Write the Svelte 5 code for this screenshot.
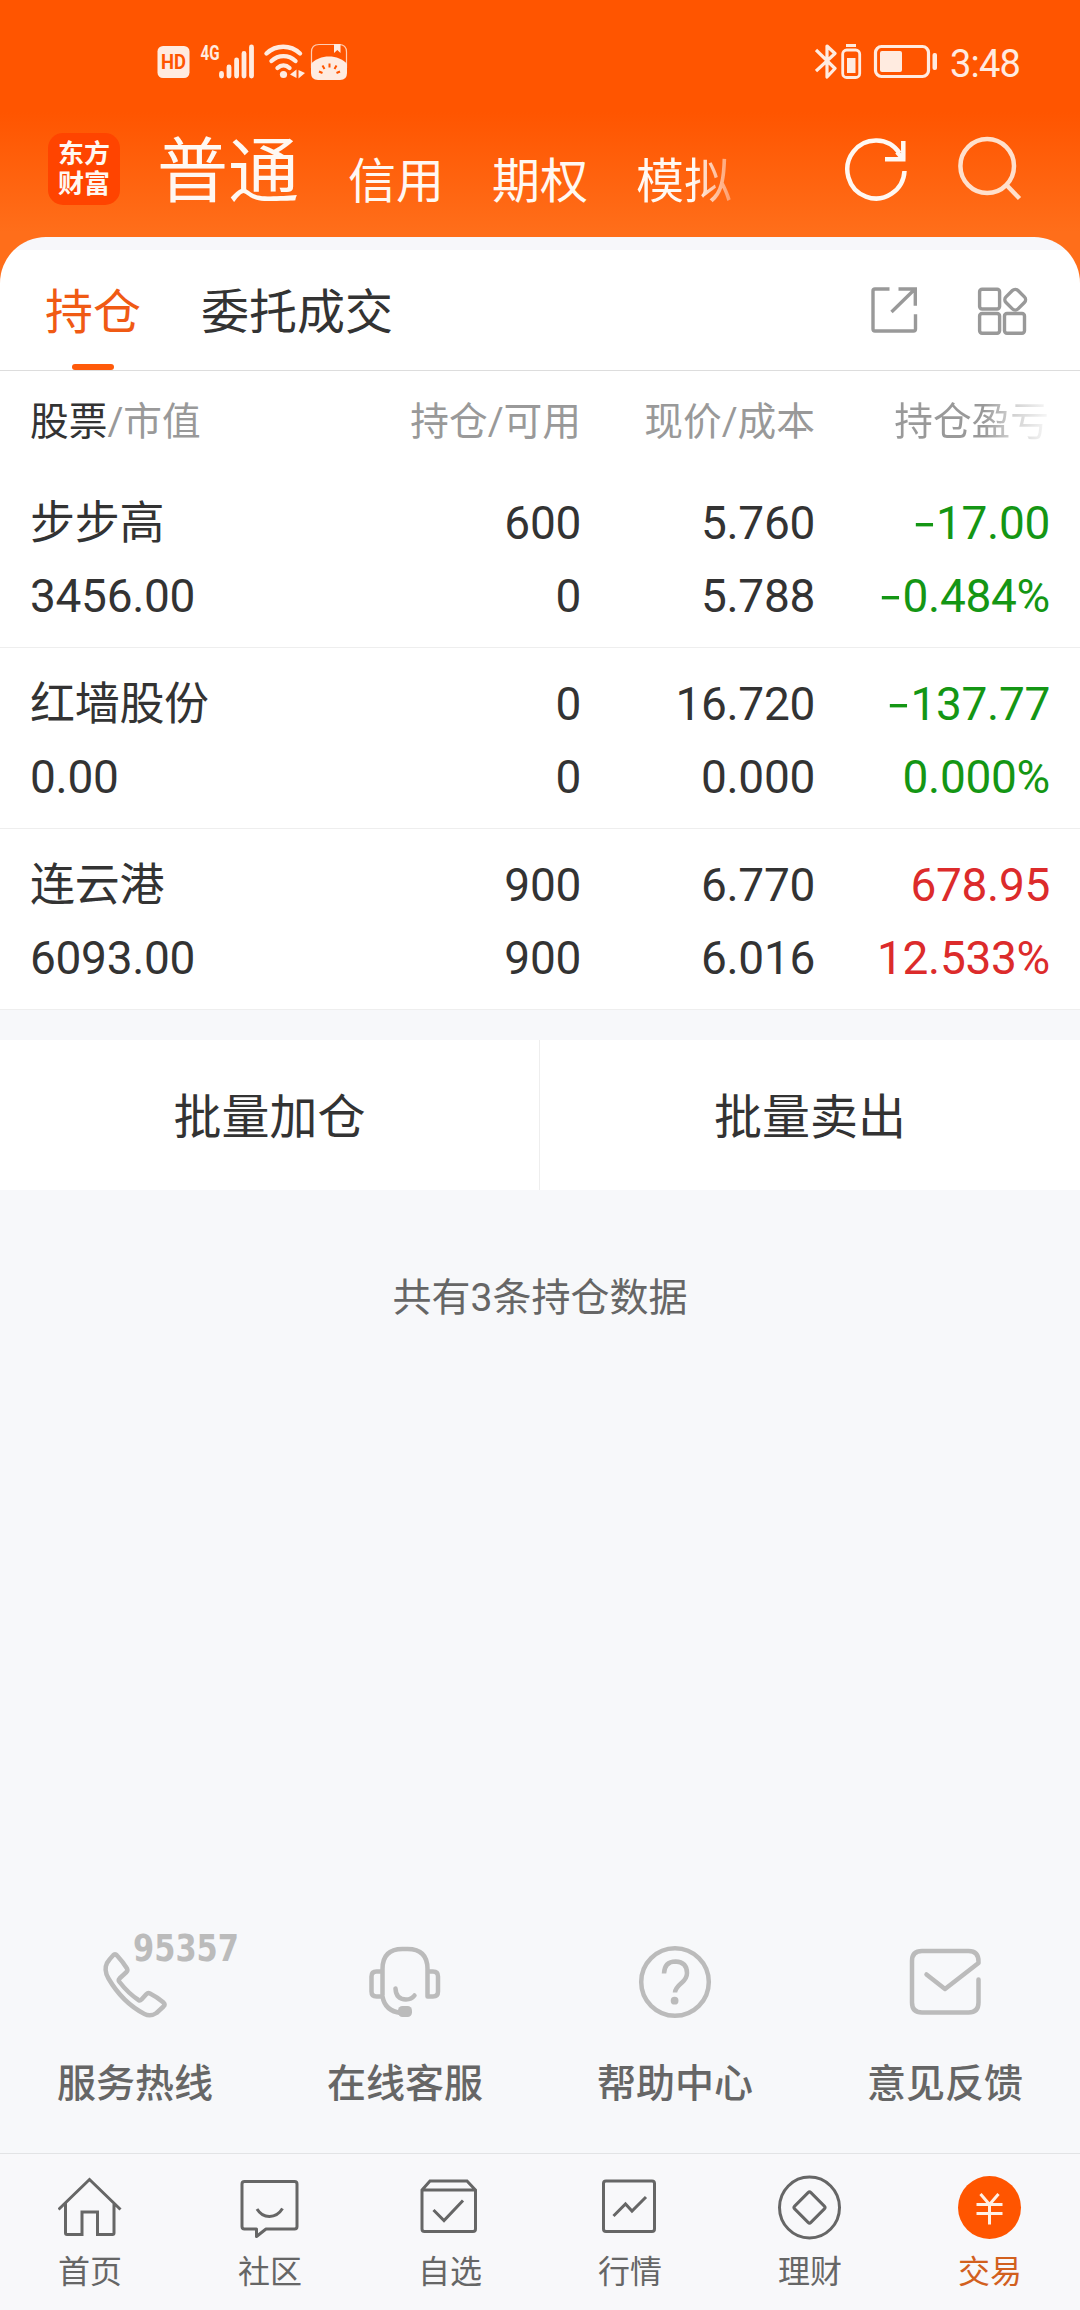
<script>
    const accounts = ['信用', '期权', '模拟'];

    const holdings = [
        { name: '步步高', value: '3456.00', held: '600', usable: '0', price: '5.760', cost: '5.788', profit: '-17.00', rate: '-0.484%' },
        { name: '红墙股份', value: '0.00', held: '0', usable: '0', price: '16.720', cost: '0.000', profit: '-137.77', rate: '0.000%' },
        { name: '连云港', value: '6093.00', held: '900', usable: '900', price: '6.770', cost: '6.016', profit: '678.95', rate: '12.533%' }
    ];

    const services = [
        { id: 'phone', label: '服务热线' },
        { id: 'chat', label: '在线客服' },
        { id: 'help', label: '帮助中心' },
        { id: 'mail', label: '意见反馈' }
    ];

    const navItems = [
        { id: 'home', label: '首页' },
        { id: 'community', label: '社区' },
        { id: 'watchlist', label: '自选' },
        { id: 'market', label: '行情' },
        { id: 'wealth', label: '理财' },
        { id: 'trade', label: '交易' }
    ];

    let active = 'trade';
</script>

<!-- the minus sign is set wider than the font's own hyphen -->
{#snippet signed(text)}
    {#if text.startsWith('-')}<i>-</i>{text.slice(1)}{:else}{text}{/if}
{/snippet}

<div class="app">
    <div class="top">
        <div class="status">
            <svg width="192" height="40" viewBox="156 42 192 40">
                <rect x="157.5" y="46" width="32" height="32" rx="5.5" fill="#ffebe0" />
                <text x="173.5" y="69" class="hd" text-anchor="middle" textLength="25" lengthAdjust="spacingAndGlyphs">HD</text>
                <text x="200.5" y="60" class="net" textLength="19" lengthAdjust="spacingAndGlyphs">4G</text>
                <path d="M221.5 73.5v2.5M229 67v9M236.6 60v16M244 53.5v22.5M251.5 47v29" stroke="#ffebe0" stroke-width="4.8" stroke-linecap="round" />
                <path d="M266.5 53.5c9.5-9 24-9 33.500 0M271.5 61c7-6.5 17-6.5 24 0M277.5 68c3.500-3.300 8.500-3.300 12 0" fill="none" stroke="#ffebe0" stroke-width="4.4" stroke-linecap="round" />
                <circle cx="283.5" cy="74.5" r="3.6" fill="#ffebe0" />
                <path d="M290 74.500l6.500-5v8.500zM298.500 70l6.500 3-6.500 5.500z" fill="#ffebe0" />
                <path d="M311.500 68V52q0-7.500 7.500-7.500h20q7.500 0 7.500 7.500v16" fill="none" stroke="#ffcdb3" stroke-width="1.200" />
                <path d="M334 44h6.500v9l-3.200-3-3.300 3z" fill="#ffebe0" />
                <path d="M311 64c8-10 28-10 36 0v9q0 7-7 7h-22q-7 0-7-7z" fill="#ffebe0" />
                <path d="M329.500 63.500v4M322.500 65.500l2 3.500M336.500 65.500l-2 3.500M319 71.500l3.500 1.500M340 71.500l-3.500 1.500" stroke="#ff5500" stroke-width="2" />
            </svg>
            <div class="status-right">
                <svg width="123" height="40" viewBox="815 42 123 40">
                    <path d="M816 50l19 18.500-8 8.500V46l8 7.500-19 17.500" fill="none" stroke="#ffebe0" stroke-width="3.2" stroke-linejoin="round" />
                    <path d="M846 45.500h10" stroke="#ffebe0" stroke-width="3" />
                    <rect x="842.700" y="50" width="17" height="27.500" rx="4" fill="none" stroke="#ffebe0" stroke-width="2.800" />
                    <rect x="847" y="58" width="8.500" height="15" fill="#ffebe0" />
                    <rect x="875.500" y="46.500" width="53" height="30" rx="6" fill="none" stroke="#ffebe0" stroke-width="3.200" />
                    <rect x="880" y="51" width="22" height="21" rx="2" fill="#ffebe0" />
                    <rect x="932.500" y="53" width="4.500" height="17" rx="2" fill="#ffebe0" />
                </svg>
                <span class="time">3:48</span>
            </div>
        </div>

        <header>
            <div class="logo"><span>东方</span><span>财富</span></div>
            <div class="accounts">
                <h1>普通</h1>
                {#each accounts as account}
                    <span class="account">{account}</span>
                {/each}
            </div>
            <svg class="head-icons" width="180" height="70" viewBox="843 135 180 70" fill="none" stroke-width="4.5">
                <path d="M904.500 171a28.600 29 0 1 1-5-18M903.300 141v18.500M885 159.200h20.500" stroke="#fff8f2" />
                <path d="M897 152l6 7" stroke="#fff8f2" />
                <ellipse cx="987.200" cy="166" rx="26.800" ry="27" stroke="#ffe0cc" />
                <path d="M1006 184.500l13.500 14" stroke="#ffe0cc" />
            </svg>
        </header>

        <div class="tabs">
            <span class="tab selected">持仓</span>
            <span class="tab">委托成交</span>
            <svg width="160" height="52" viewBox="870 285 160 52" fill="none" stroke="#999" stroke-width="3.4">
                <path d="M889.500 289h-14.500q-2 0-2 2v38q0 2 2 2h38.500q2 0 2-2v-14.700M898.500 289h16.800v16.700M891.500 312l23.500-23" />
                <rect x="979.600" y="289.300" width="20" height="19.700" rx="2.500" />
                <rect x="979.600" y="313.500" width="20" height="19.700" rx="2.500" />
                <rect x="1004.500" y="313.500" width="20" height="19.700" rx="2.500" />
                <rect x="1006.700" y="291.200" width="17" height="17" rx="4" transform="rotate(45 1015.200 299.700)" />
            </svg>
        </div>
    </div>

    <section class="table">
        <div class="row titles">
            <span><b>股票</b>/市值</span>
            <span>持仓/可用</span>
            <span>现价/成本</span>
            <span class="fade">持仓盈亏</span>
        </div>
        {#each holdings as item}
            <div class="row holding" class:down={item.profit.startsWith('-')}>
                <span class="name">{item.name}</span>
                <span>{item.held}</span>
                <span>{item.price}</span>
                <span class="profit">{@render signed(item.profit)}</span>
                <span>{item.value}</span>
                <span>{item.usable}</span>
                <span>{item.cost}</span>
                <span class="profit">{@render signed(item.rate)}</span>
            </div>
        {/each}
    </section>

    <div class="batch">
        <button>批量加仓</button>
        <button>批量卖出</button>
    </div>

    <p class="count">共有3条持仓数据</p>

    <div class="services">
        {#each services as service}
            <div class="service">
                <svg width="270" height="100" viewBox="0 -10 270 100" fill="none" stroke="#bbb" stroke-width="4.5" stroke-linecap="round" stroke-linejoin="round">
                    {#if service.id === 'phone'}
                        <path d="M113 24.500q2-2.500 4 0q6 6.500 10 13q1 2-.5 3.500l-7 6.500q-1.500 1.500 0 3.500q9 11.500 19 18q1.500 1 3-.5l5-5.500q1.500-1.500 3.500-.5q7 3.500 13.500 9q2 2 0 4l-7 6.500q-6 4-12 1q-22-11.500-36-35.500q-5-8.500-1.500-15.500q3-4.500 6-7.500z" />
                        <text x="133" y="29.500" class="hotline" textLength="106" lengthAdjust="spacingAndGlyphs">95357</text>
                    {:else if service.id === 'chat'}
                        <path d="M112.500 64V38q0-20 20-20h5q20 0 20 20v27.500h5.500q5 0 5-5v-15q0-5-5-5h-5.500M111 40.500h-4.500q-5 0-5 5v15q0 5 5 5h6q2.500 14.500 18.500 16.500" />
                        <path d="M125.500 57.500q.5 11 10.500 11q5.500 0 8.500-4" />
                        <rect x="128" y="75" width="14" height="11" rx="4.500" fill="#bbb" stroke="none" />
                    {:else if service.id === 'help'}
                        <circle cx="135" cy="51" r="33.800" />
                        <path d="M124 42.500q.5-12 11.500-12q11.500.5 11.500 11.500q0 5-5 9.500q-7 6-7 10" stroke-linecap="butt" />
                        <circle cx="134.600" cy="69.700" r="3.900" fill="#bbb" stroke="none" />
                    {:else}
                        <path d="M168.500 48.500v23q0 10-10 10h-46.500q-10 0-10-10V30q0-10 10-10h46.500q10 0 10 10.500v1.500l-33.500 26-18.500-14.500" />
                    {/if}
                </svg>
                <span>{service.label}</span>
            </div>
        {/each}
    </div>

    <nav>
        {#each navItems as item}
            <div class="nav-item" class:active={item.id === active}>
                <svg width="64" height="66" viewBox="0.5 0 64 66" fill="none" stroke="#666" stroke-width="3" stroke-linejoin="round">
                    {#if item.id === 'home'}
                        <path d="M1 34.500L32 4.500l31 30M8 28v30q0 1.500 1.500 1.500h15v-22.500h15.500v22.500h15q1.500 0 1.500-1.500v-30" stroke-linejoin="miter" />
                    {:else if item.id === 'community'}
                        <path d="M6 6.500h50q2.500 0 2.500 2.500v42.500q0 2.500-2.500 2.500h-28.500l-9.500 7.500v-7.500h-12q-2.500 0-2.500-2.500v-42.500q0-2.500 2.500-2.500z" transform="translate(1)" />
                        <path d="M19.500 34c6 10 19 10 25.500-.5" />
                    {:else if item.id === 'watchlist'}
                        <path d="M4.500 15L12.500 6h37l8.500 9v39q0 2.500-2.500 2.500h-48.500q-2.500 0-2.500-2.500zM4.500 15h53M16 35l10.500 10.500 19-20" stroke-linejoin="miter" />
                    {:else if item.id === 'market'}
                        <rect x="5.500" y="6" width="51" height="50.500" rx="2.500" transform="translate(.5)" />
                        <path d="M16 41l12-12 6.500 7 14-14" stroke-linejoin="miter" />
                    {:else if item.id === 'wealth'}
                        <ellipse cx="32" cy="32.500" rx="30" ry="30.500" />
                        <rect x="20.500" y="21" width="23" height="23" rx="2" transform="rotate(45 32 32.500)" />
                    {:else}
                        <circle cx="32" cy="32.500" r="31.500" fill="#ff5500" stroke="none" />
                        <path d="M23 19l9 10.500 9-10.500M19 29.500h26M19 38.500h26M32 29v20.500" stroke="#fff0e5" />
                    {/if}
                </svg>
                <span>{item.label}</span>
            </div>
        {/each}
    </nav>
</div>

<style>
    :global(body) {
        margin: 0;
        background: #f7f8fa;
    }

    .app {
        display: flex;
        flex-direction: column;
        width: 1080px;
        height: 2310px;
        background: #f7f8fa;
        color: #333;
        font-family: Roboto, "Noto Sans CJK SC", sans-serif;
        overflow: hidden;
    }

    svg {
        display: block;
        flex: none;
    }

    .top {
        background: linear-gradient(#ff5500 112px, #ff6e1a 232px);
    }

    /* status bar */
    .status {
        display: flex;
        justify-content: space-between;
        height: 78px;
        padding: 42px 60px 0 156px;
    }

    .status-right {
        display: flex;
        gap: 12px;
    }

    .time {
        color: #ffebe0;
        font-size: 38px;
        line-height: 44px;
        letter-spacing: -0.8px;
    }

    .hd {
        fill: #ff5500;
        font-size: 21px;
        font-weight: 700;
    }

    .net {
        fill: #ffebe0;
        font-size: 20px;
        font-weight: 700;
    }

    /* header */
    header {
        display: flex;
        height: 117px;
        padding: 0 57px 0 48px;
    }

    .logo {
        display: flex;
        flex-direction: column;
        align-items: center;
        justify-content: center;
        width: 72px;
        height: 72px;
        margin-top: 13px;
        border-radius: 15px;
        background: #ff4400;
        color: #fff8f2;
        font-size: 26px;
        font-weight: 700;
        line-height: 30px;
    }

    .accounts {
        display: flex;
        align-items: baseline;
        flex: 1;
        gap: 48px;
        padding-left: 37px;
        color: #fff8f2;
    }

    h1 {
        margin: 0 1px 0 0;
        font-size: 71px;
        font-weight: 400;
        line-height: 104px;
    }

    .account {
        position: relative;
        top: 2px;
        font-size: 48px;
    }

    .account:last-child {
        background: linear-gradient(90deg, #fff8f2 60%, #ff9a66);
        background-clip: text;
        color: transparent;
    }

    .head-icons {
        margin-top: 15px;
    }

    /* tabs */
    .tabs {
        display: flex;
        gap: 60px;
        height: 120px;
        padding: 13px 50px 0 45px;
        border-bottom: 1px solid #ddd;
        border-radius: 46px 46px 0 0;
        background: linear-gradient(#f7f7fa 13px, #fff 13px);
    }

    .tab {
        position: relative;
        font-size: 48px;
        line-height: 126px;
    }

    .selected {
        color: #f05a14;
    }

    .selected::after {
        content: '';
        position: absolute;
        left: 27px;
        bottom: 0;
        width: 42px;
        height: 6px;
        border-radius: 3px;
        background: #ff5a0a;
    }

    .tabs svg {
        margin: 35px 0 0 auto;
    }

    /* holdings */
    .table {
        background: #fff;
    }

    .row {
        display: grid;
        grid-template-columns: 301px 250px 234px 235px;
        padding: 0 30px;
        text-align: right;
    }

    .row span:nth-child(4n + 1) {
        text-align: left;
    }

    .titles {
        color: #999;
        font-size: 38.7px;
        line-height: 102px;
        height: 96px;
    }

    .titles b {
        color: #333;
        font-weight: 400;
    }

    .fade {
        background: linear-gradient(90deg, #999 58%, #ccc 74%, #f8f8f8 100%);
        background-clip: text;
        color: transparent;
        justify-self: end;
        margin-right: 1px;
    }

    .holding {
        padding-top: 20px;
        padding-bottom: 14px;
        border-bottom: 1px solid #eee;
        font-size: 46px;
        line-height: 73px;
        letter-spacing: -0.3px;
    }

    .holding i {
        display: inline-block;
        margin: 0 4px 0 2px;
        font-family: "Noto Sans CJK SC", sans-serif;
        font-size: 48px;
        font-style: normal;
        line-height: 1;
        transform: translateY(-1px) scaleX(1.4);
    }

    .name {
        font-size: 45px;
    }

    .profit {
        color: #dc2b2b;
    }

    .down .profit {
        color: #149614;
    }

    /* batch actions */
    .batch {
        display: flex;
        height: 150px;
        margin-top: 30px;
        background: #fff;
    }

    button {
        box-sizing: border-box;
        width: 540px;
        padding: 5px 0 0;
        border: 0;
        background: none;
        color: #333;
        font-family: inherit;
        font-size: 48px;
        line-height: 56px;
    }

    button:first-child {
        border-right: 1px solid #eee;
    }

    .count {
        margin: 78px 0 0;
        color: #666;
        font-size: 39px;
        line-height: 60px;
        text-align: center;
    }

    /* services */
    .services {
        display: flex;
        margin-top: auto;
        padding-bottom: 39px;
    }

    .service {
        display: flex;
        flex-direction: column;
        align-items: center;
        gap: 33px;
        color: #666;
        font-size: 39px;
        font-weight: 500;
        line-height: 60px;
    }

    .hotline {
        fill: #bbb;
        stroke: none;
        font-family: "DejaVu Sans", sans-serif;
        font-size: 37px;
        font-weight: 700;
    }

    /* bottom bar */
    nav {
        display: flex;
        height: 156px;
        border-top: 1px solid #e2e3e5;
        background: #f8f8fa;
    }

    .nav-item {
        display: flex;
        flex-direction: column;
        align-items: center;
        flex: 1;
        gap: 11px;
        padding-top: 21px;
        color: #666;
        font-size: 32px;
        line-height: 40px;
    }

    .active {
        color: #d2601e;
    }
</style>
